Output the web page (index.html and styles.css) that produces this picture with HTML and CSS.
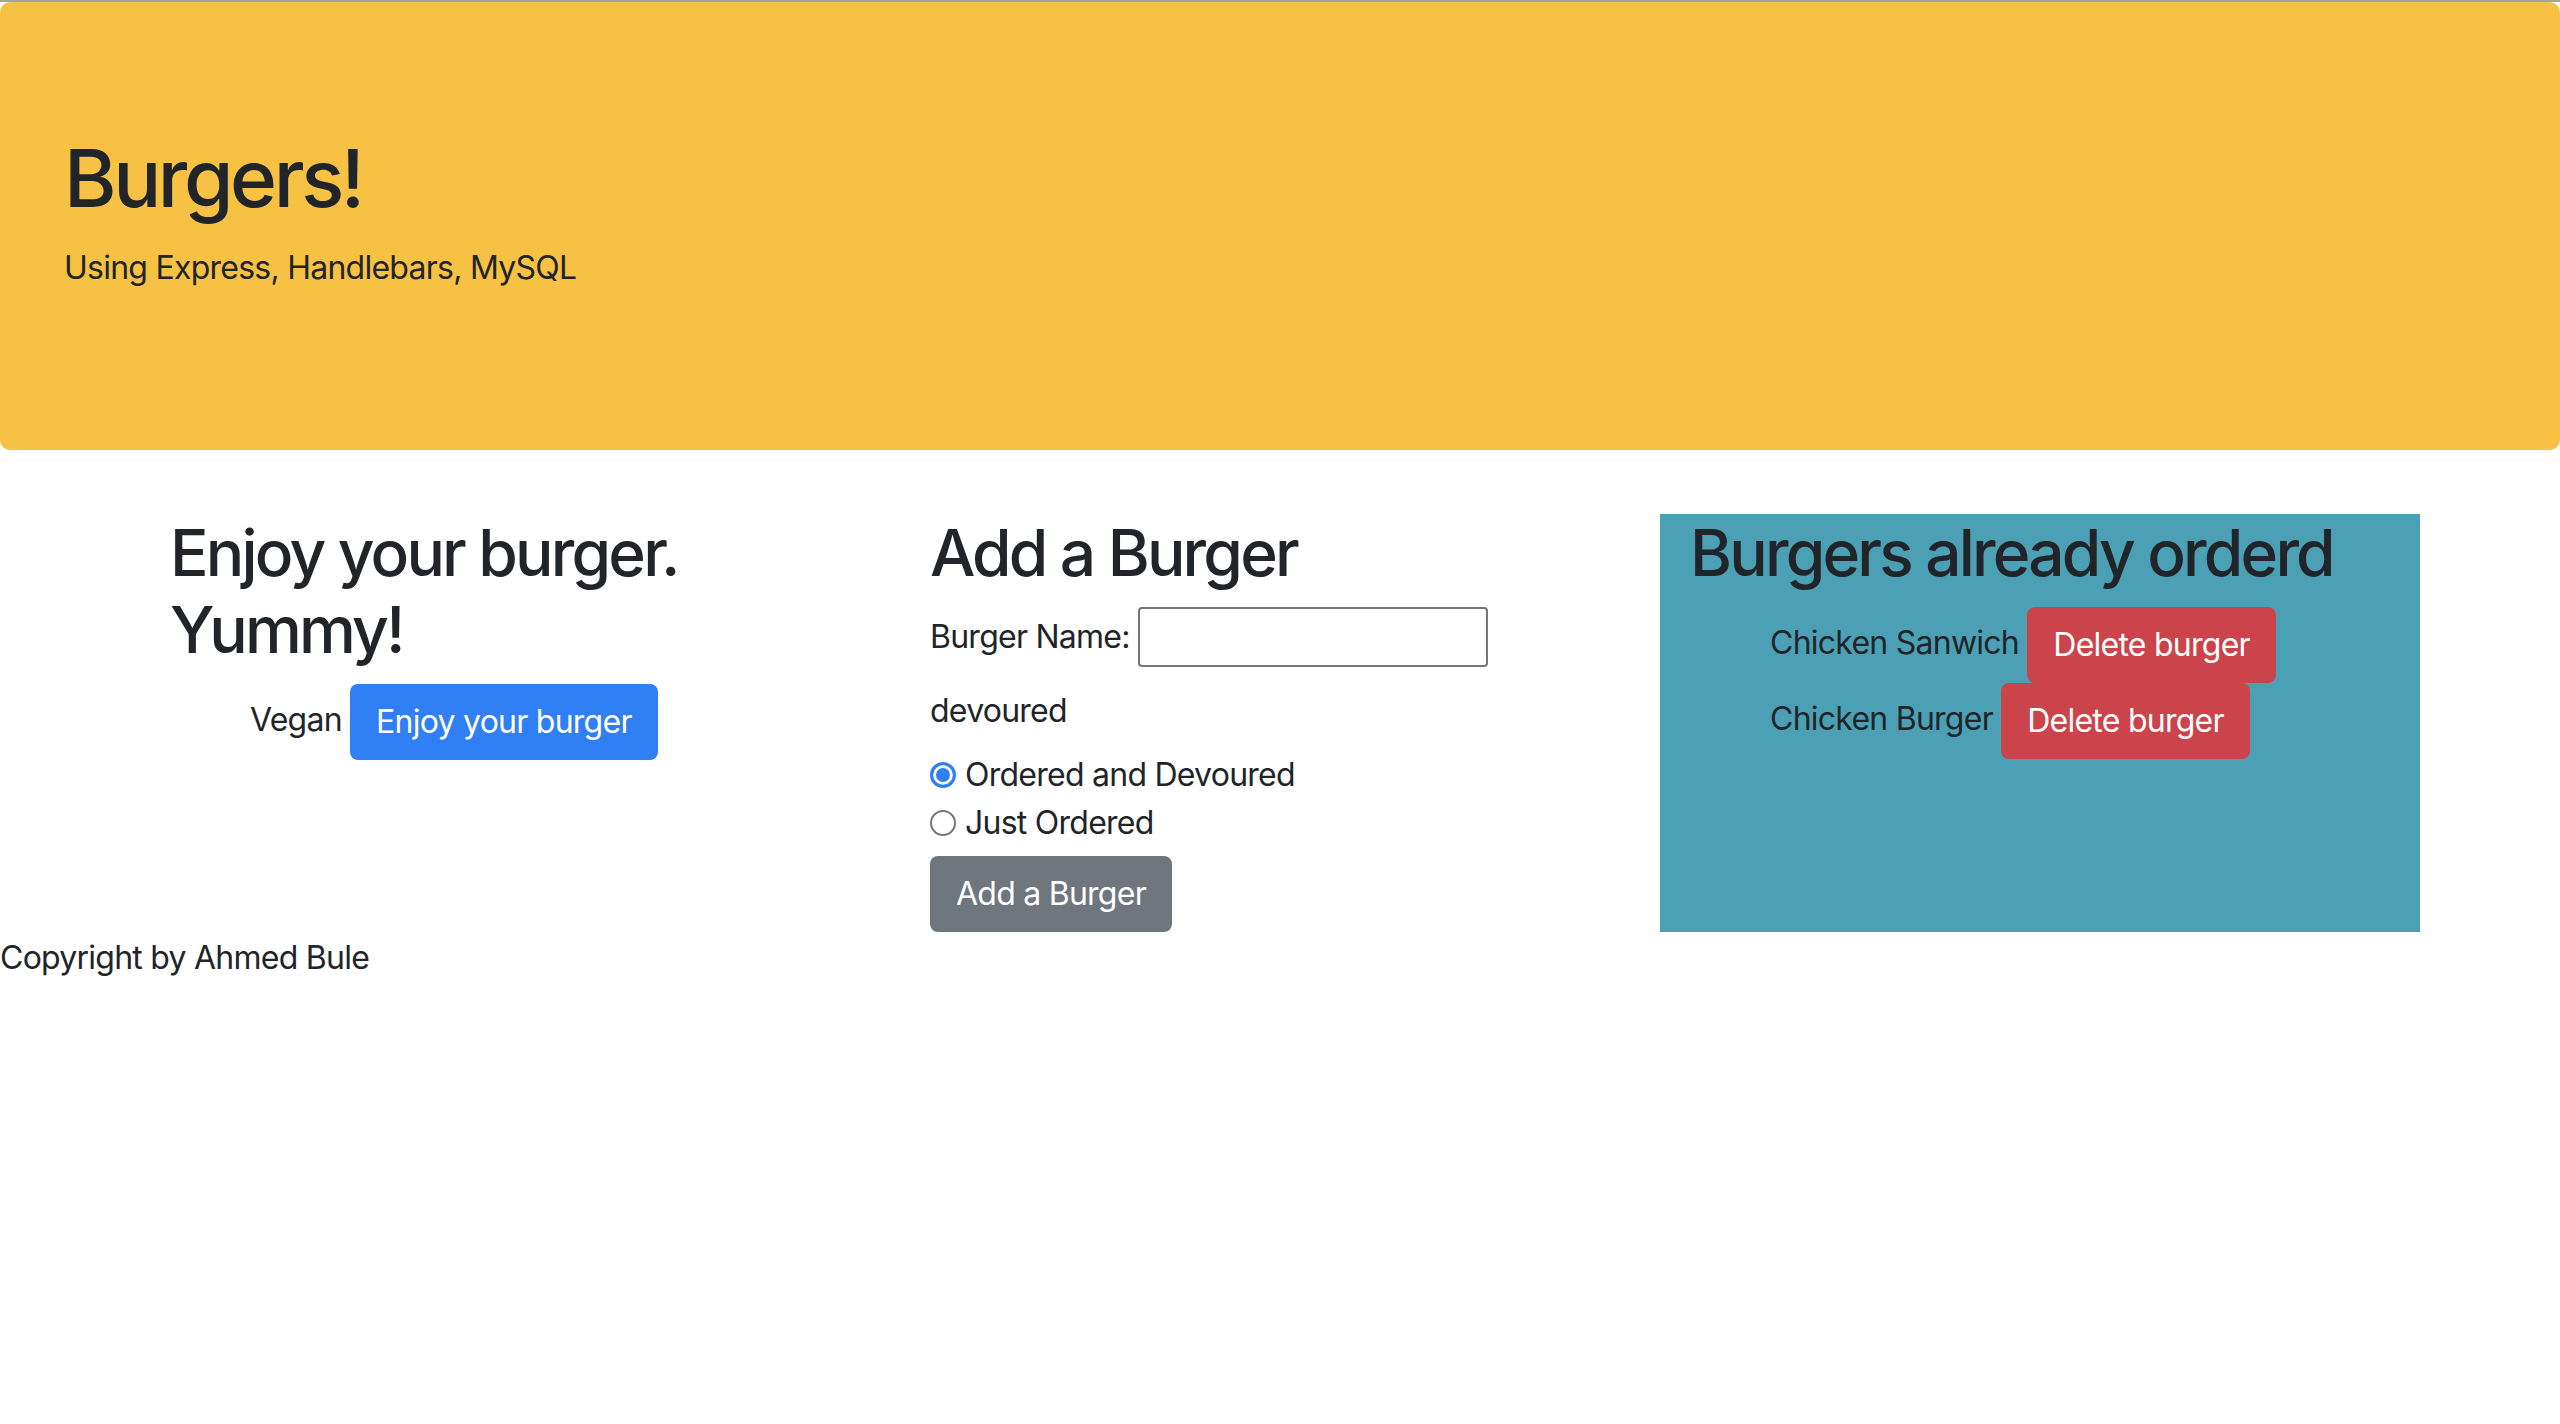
FILE: index.html
```html
<!DOCTYPE html>
<html lang="en">
<head>
<meta charset="utf-8">
<title>Burgers!</title>
<link rel="stylesheet" href="styles.css">
</head>
<body>
<div class="jumbotron">
  <h1 class="display">Burgers!</h1>
  <p class="tagline">Using Express, Handlebars, MySQL</p>
</div>
<div class="container">
  <div class="row">
    <div class="col">
      <h2 class="heading">Enjoy your burger. Yummy!</h2>
      <ul class="list">
        <li class="item">Vegan <button class="btn btn-primary">Enjoy your burger</button></li>
      </ul>
    </div>
    <div class="col">
      <h2 class="heading">Add a Burger</h2>
      <form class="form">
        <div class="field-row">
          <label class="label" for="bu">Burger Name:</label>
          <input class="text-input" type="text" id="bu" name="burger_name">
        </div>
        <div class="devoured">devoured</div>
        <label class="radio-row"><input class="radio" type="radio" name="devoured" value="1" checked> Ordered and Devoured</label>
        <label class="radio-row"><input class="radio" type="radio" name="devoured" value="0"> Just Ordered</label>
        <button type="button" class="btn btn-secondary">Add a Burger</button>
      </form>
    </div>
    <div class="col col-info">
      <h2 class="heading">Burgers already orderd</h2>
      <ul class="list">
        <li class="item">Chicken Sanwich <button class="btn btn-danger">Delete burger</button></li>
        <li class="item">Chicken Burger <button class="btn btn-danger">Delete burger</button></li>
      </ul>
    </div>
  </div>
</div>
<footer class="footer">Copyright by Ahmed Bule</footer>
</body>
</html>
```
FILE: styles.css
```css
html, body {
  margin: 0;
  padding: 0;
}
body {
  border-top: 2px solid #a3a3a3;
  font-family: Inter, "Liberation Sans", Arial, sans-serif;
  font-size: 32px;
  line-height: 48px;
  letter-spacing: -0.75px;
  color: #212529;
  background: #fff;
}
.jumbotron {
  background: #f7c244;
  padding: 128px 64px;
  border-radius: 10px;
  margin-bottom: 64px;
}
.display {
  font-size: 80px;
  font-weight: 500;
  line-height: 96px;
  margin: 0 0 18px;
  letter-spacing: -3.4px;
}
.tagline {
  margin: 0 0 30px;
}
.container {
  width: 2280px;
  margin: 0 auto;
}
.row {
  display: flex;
  align-items: stretch;
}
.col {
  width: 760px;
  box-sizing: border-box;
  padding: 0 30px;
}
.col-info {
  background: #4ba0b5;
}
.heading {
  font-size: 64px;
  font-weight: 500;
  line-height: 77px;
  margin: 0 0 16px;
  letter-spacing: -2.8px;
}
.list {
  list-style: none;
  margin: 0;
  padding-left: 80px;
}
.item {
  line-height: 48px;
}
.btn {
  display: inline-block;
  vertical-align: middle;
  font-family: inherit;
  font-size: 32px;
  line-height: 48px;
  letter-spacing: inherit;
  padding: 12px 24px;
  border: 2px solid transparent;
  border-radius: 8px;
  color: #fff;
  cursor: pointer;
}
.btn-primary { background: #307ff5; }
.btn-secondary { background: #6f767e; }
.btn-danger { background: #cc444b; }
.form {
  margin: 0;
}
.field-row {
  display: flex;
  align-items: center;
  gap: 8px;
  height: 60px;
}
.label {
  display: inline-block;
}
.text-input {
  font-family: inherit;
  font-size: 32px;
  line-height: 48px;
  width: 350px;
  height: 60px;
  box-sizing: border-box;
  padding: 2px 4px;
  border: 2px solid #767676;
  border-radius: 4px;
  margin: 0;
}
.devoured {
  margin: 20px 0 16px;
}
.radio-row {
  display: flex;
  align-items: center;
  gap: 9px;
}
.radio {
  appearance: none;
  -webkit-appearance: none;
  width: 26px;
  height: 26px;
  margin: 0;
  border: 2px solid #767676;
  border-radius: 50%;
  background: #fff;
  box-sizing: border-box;
}
.radio:checked {
  border: 3px solid #307ff5;
  background: #307ff5;
  box-shadow: inset 0 0 0 3px #fff;
}
.form .btn {
  margin-top: 9px;
}
.footer {
  line-height: 48px;
  padding-top: 2px;
}
```
